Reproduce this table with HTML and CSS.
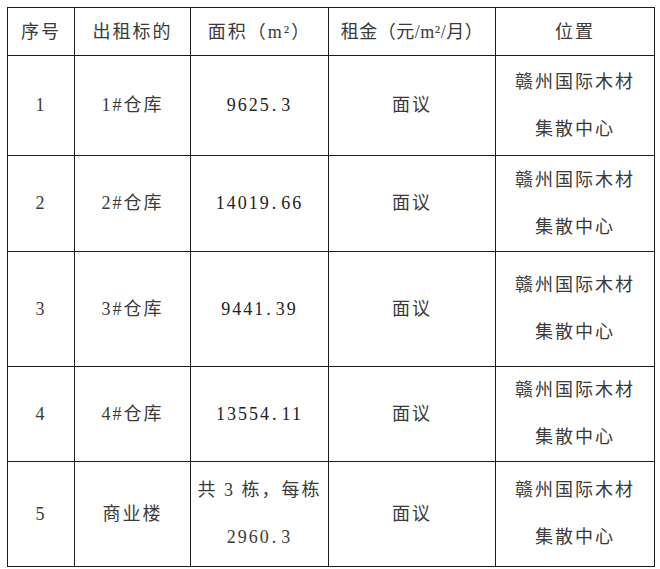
FILE: index.html
```html
<!DOCTYPE html>
<html lang="zh-CN">
<head>
<meta charset="utf-8">
<title>出租标的</title>
<link rel="stylesheet" href="styles.css">
</head>
<body>
<table class="lease">
  <colgroup>
    <col class="c-no">
    <col class="c-name">
    <col class="c-area">
    <col class="c-rent">
    <col class="c-loc">
  </colgroup>
  <thead>
    <tr class="r-head">
      <th>序号</th>
      <th>出租标的</th>
      <th>面积（m²）</th>
      <th class="rent-h">租金（元/m²/月）</th>
      <th>位置</th>
    </tr>
  </thead>
  <tbody>
    <tr class="r1">
      <td>1</td>
      <td>1#仓库</td>
      <td class="num">9625<span class="dot">.</span>3</td>
      <td>面议</td>
      <td class="loc">赣州国际木材<br>集散中心</td>
    </tr>
    <tr class="r2">
      <td>2</td>
      <td>2#仓库</td>
      <td class="num">14019<span class="dot">.</span>66</td>
      <td>面议</td>
      <td class="loc">赣州国际木材<br>集散中心</td>
    </tr>
    <tr class="r3">
      <td>3</td>
      <td>3#仓库</td>
      <td class="num">9441<span class="dot">.</span>39</td>
      <td>面议</td>
      <td class="loc">赣州国际木材<br>集散中心</td>
    </tr>
    <tr class="r4">
      <td>4</td>
      <td>4#仓库</td>
      <td class="num">13554<span class="dot">.</span>11</td>
      <td>面议</td>
      <td class="loc">赣州国际木材<br>集散中心</td>
    </tr>
    <tr class="r5">
      <td>5</td>
      <td>商业楼</td>
      <td class="num multi">共 3 栋，每栋<br>2960<span class="dot">.</span>3</td>
      <td>面议</td>
      <td class="loc">赣州国际木材<br>集散中心</td>
    </tr>
  </tbody>
</table>
</body>
</html>
```

FILE: styles.css
```css
html, body {
  margin: 0;
  padding: 0;
  background: #ffffff;
}

body {
  padding: 7px 0 0 7px;
  font-family: "Liberation Serif", "Noto Sans CJK SC", serif;
  color: #3a3a3a;
}

.lease {
  border-collapse: collapse;
  table-layout: fixed;
  width: 647px;
}

.c-no { width: 67px; }
.c-name { width: 116px; }
.c-area { width: 138px; }
.c-rent { width: 167px; }
.c-loc { width: 159px; }

.lease th,
.lease td {
  border: 1.5px solid #1c1c1c;
  padding: 0;
  text-align: center;
  vertical-align: middle;
  font-size: 18px;
  font-weight: 400;
  letter-spacing: 2px;
  line-height: 47px;
}

.lease th {
  line-height: 24px;
}

.lease th.rent-h {
  letter-spacing: 0.5px;
}

.r-head { height: 48px; }
.r1 { height: 100px; }
.r2 { height: 96px; }
.r3 { height: 115px; }
.r4 { height: 94px; }
.r5 { height: 105px; }

.num {
  letter-spacing: 1px;
  color: #222222;
}

.num.multi {
  color: #3a3a3a;
}

.dot {
  letter-spacing: 0;
  padding: 0 5px 0 1px;
}

.loc {
  letter-spacing: 3px;
}
```
